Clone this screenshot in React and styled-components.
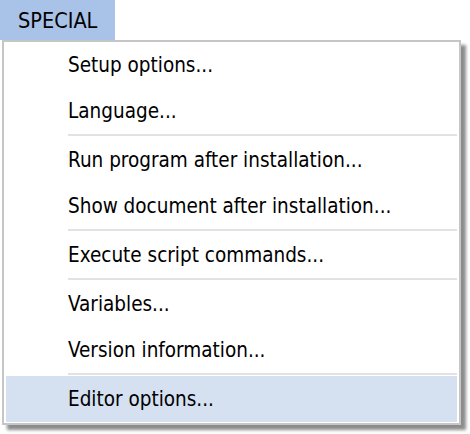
import React from "react";
import styled, { createGlobalStyle } from "styled-components";

const Global = createGlobalStyle`
  html, body { margin: 0; padding: 0; background: #ffffff; }
  body { font-family: "DejaVu Sans Condensed", "DejaVu Sans", "Liberation Sans", sans-serif; }
`;

const Page = styled.div`
  width: 470px;
  height: 434px;
  display: flex;
  flex-direction: column;
  align-items: flex-start;
  background: #ffffff;
`;

const Tab = styled.div`
  height: 40px;
  width: 115px;
  box-sizing: border-box;
  padding-left: 18px;
  display: flex;
  align-items: center;
  background: #a9c2e7;
  color: #000;
  font-size: 21.5px;
`;

const Menu = styled.div`
  margin-left: 2px;
  width: 459px;
  box-sizing: border-box;
  border: 2px solid #c6c6c6;
  padding: 0 2px 1px;
  background: #ffffff;
  box-shadow: 5px 5px 3px rgba(0, 0, 0, 0.45);
  display: flex;
  flex-direction: column;
`;

const Item = styled.div`
  height: 46px;
  display: flex;
  align-items: center;
  padding-left: 62px;
  font-size: 20.5px;
  color: #000;
  background: ${(p) => (p.$active ? "#d5e0f1" : "transparent")};
  white-space: nowrap;
`;

const Separator = styled.div`
  height: 2px;
  margin: 0 0 1px 62px;
  background: #e1e1e6;
`;

const groups = [
  ["Setup options...", "Language..."],
  ["Run program after installation...", "Show document after installation..."],
  ["Execute script commands..."],
  ["Variables...", "Version information..."],
  ["Editor options..."],
];

export default function App() {
  return (
    <>
      <Global />
      <Page>
        <Tab>SPECIAL</Tab>
        <Menu>
          {groups.map((g, gi) => (
            <React.Fragment key={gi}>
              {gi > 0 && <Separator />}
              {g.map((label) => (
                <Item key={label} $active={label === "Editor options..."}>
                  {label}
                </Item>
              ))}
            </React.Fragment>
          ))}
        </Menu>
      </Page>
    </>
  );
}
